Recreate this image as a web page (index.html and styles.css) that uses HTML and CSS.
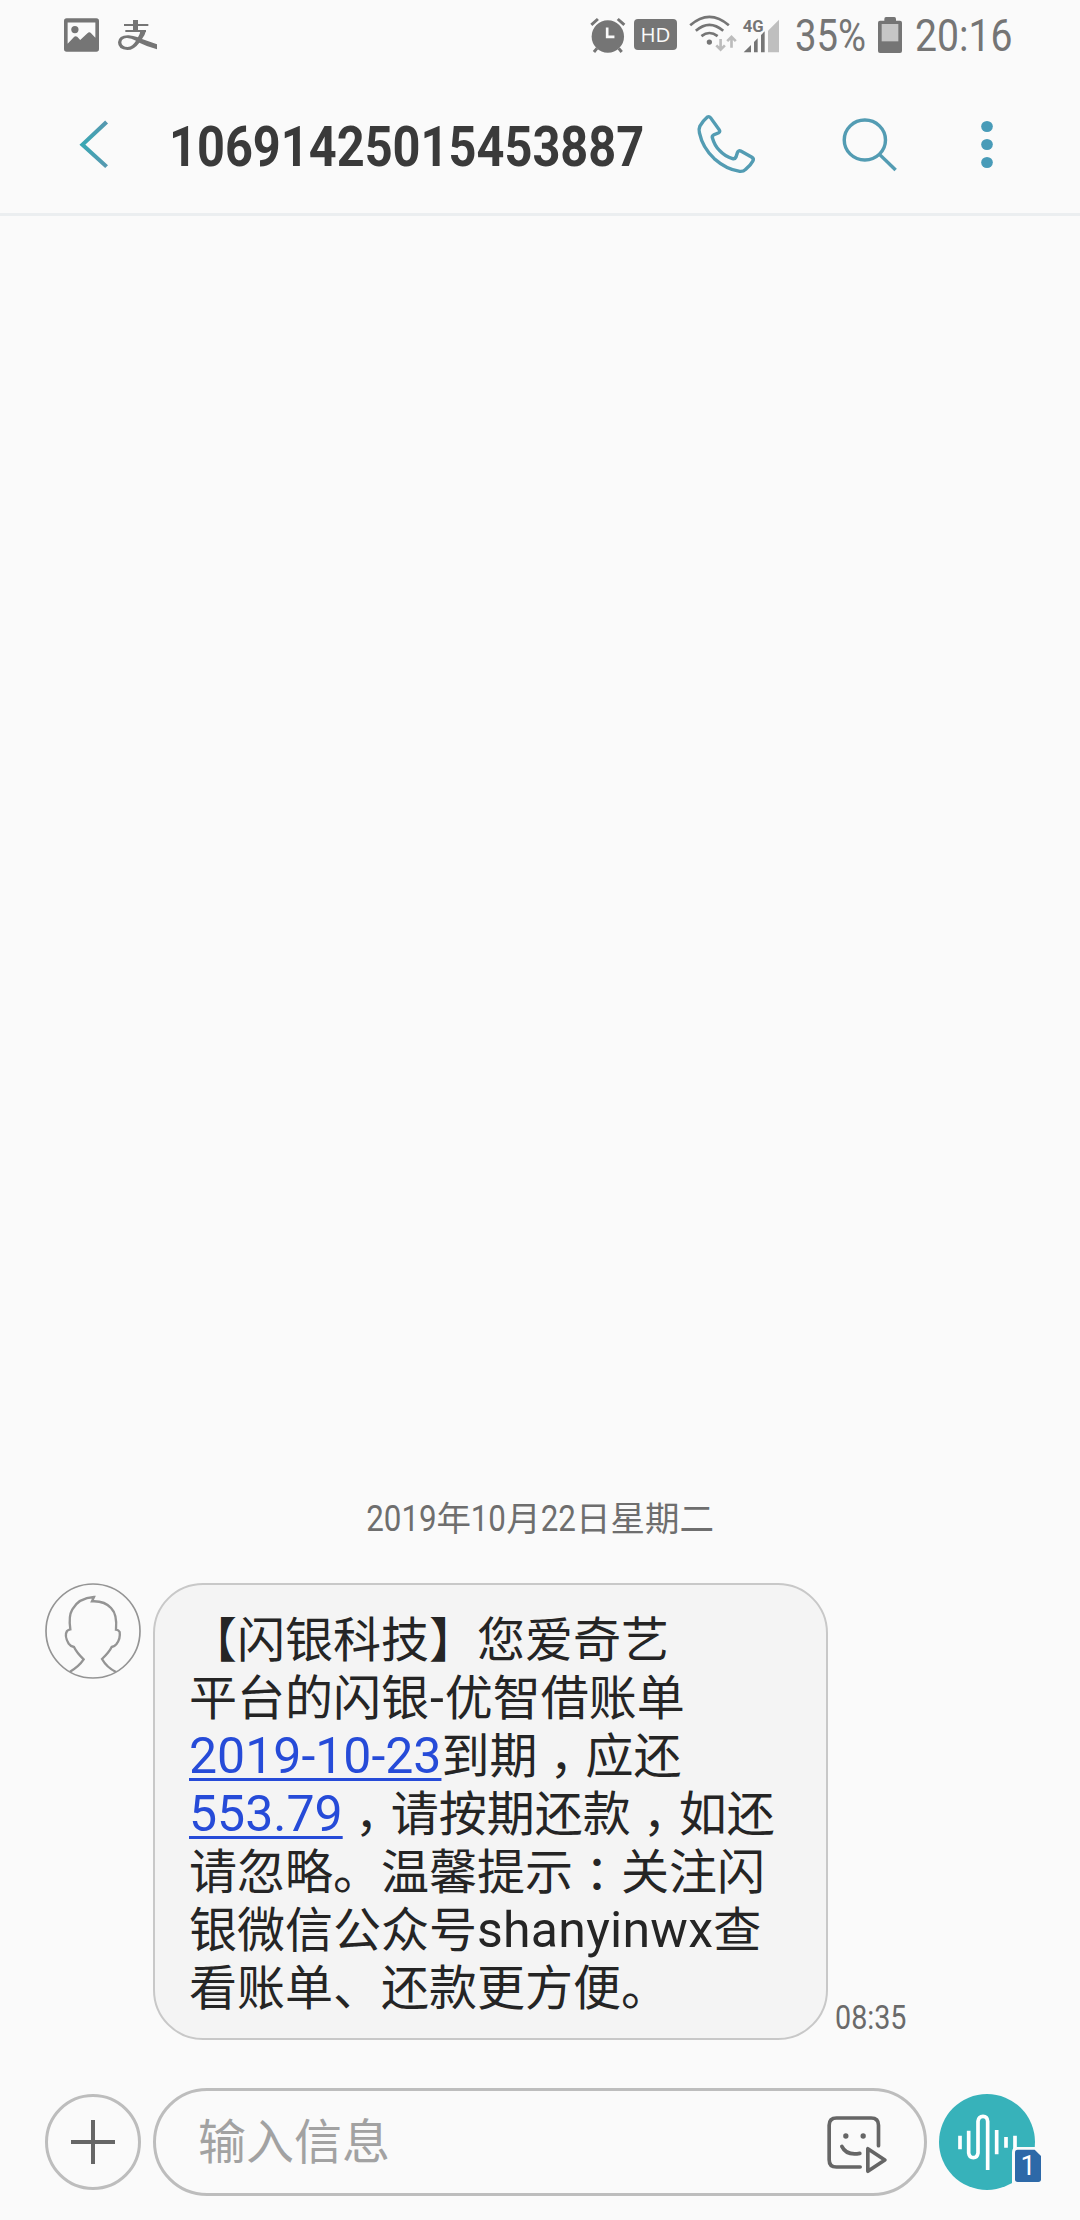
FILE: index.html
```
<!DOCTYPE html>
<html lang="zh-CN">

<head>
  <meta charset="UTF-8">
  <meta name="viewport" content="width=device-width, initial-scale=1.0">
  <title>信息</title>
  <link rel="stylesheet" href="styles.css">
</head>

<body>
  <div class="status">
    <svg class="st-photo" viewBox="73 53 106 101">
      <path fill="#757575" fill-rule="evenodd" d="M81 53h90q8 0 8 8v85q0 8-8 8H81q-8 0-8-8V61q0-8 8-8zM84 66v64l20-21q4-4 9 0l9 10 22-21q6-5 11 0l13 14V66z" />
      <circle cx="106" cy="87" r="11" fill="#757575" />
    </svg>
    <svg class="st-pay" viewBox="234 60 117 90">
      <path fill="#757575" d="M279 60h15v32h-15zM252 72h73v6h-73zM256 90h62v6h-62z" />
      <path fill="#757575" d="M301 92h17q-3 13-12 25l45 16v15q-29-8-53-20-16 22-36 22-28-1-28-23 2-22 32-21 13 1 28 6 6-9 7-20zM288 122q-16-9-29-8-15 2-15 14 2 12 19 13 15-2 25-19z" fill-rule="evenodd" />
    </svg>
    <svg class="st-alarm" viewBox="61 50 107 109">
      <circle cx="114" cy="109" r="49" fill="#757575" />
      <path d="M64 74l20-18M144 56l20 18M81 145l-9 11M147 145l9 11" stroke="#757575" stroke-width="9" fill="none" />
      <path d="M112 82v28h22" stroke="#fafafa" stroke-width="8" fill="none" />
    </svg>
    <div class="hd">HD</div>
    <svg class="st-wifi" viewBox="360 46 144 112">
      <path d="M363 77Q421 26 480 77M380 94Q421 58 463 94M397 110Q421 91 446 110" stroke="#757575" stroke-width="8" fill="none" />
      <circle cx="421" cy="128" r="8" fill="#757575" />
      <path d="M455 119v30M442 138l13 13 13-13M488 145v-30M475 125l13-13 13 13" stroke="#bcbcbc" stroke-width="8" fill="none" />
    </svg>
    <svg class="st-signal" viewBox="522 56 108 102">
      <path fill="#bfbfbf" d="M597 91l33-33v98h-33z" />
      <path fill="#757575" d="M524 156l22-22v22zM555 125l11-11v42h-11zM576 104l11-11v63h-11z" />
      <text x="521" y="96" class="net">4G</text>
    </svg>
    <div class="percent"><span class="narrow">35%</span></div>
    <svg class="st-battery" viewBox="294 51 72 108">
      <path fill="#757575" d="M318 51h25q5 0 5 6v5h12q6 0 6 6v85q0 6-6 6h-60q-6 0-6-6V68q0-6 6-6h13v-5q0-6 5-6z" />
      <path fill="#c6c6c6" d="M305 72h50v52h-50z" />
    </svg>
    <div class="clock"><span class="narrow">20:16</span></div>
  </div>

  <div class="header">
    <svg class="back" viewBox="230 120 87 147" preserveAspectRatio="none">
      <defs>
        <linearGradient id="teal" x1="0" y1="0" x2="0" y2="1">
          <stop offset="0" stop-color="#5798b0" />
          <stop offset="0.5" stop-color="#3aa8b4" />
          <stop offset="1" stop-color="#5798b0" />
        </linearGradient>
      </defs>
      <path d="M310 126l-70 68 70 66" stroke="url(#teal)" stroke-width="12" fill="none" />
    </svg>
    <div class="title"><span class="narrow">10691425015453887</span></div>
    <svg class="call" viewBox="450 98 180 186" preserveAspectRatio="none">
      <path d="M486 110Q491 107 495 112L520 148Q524 154 519 157L505 163Q498 167 501 174Q507 196 521 210Q537 228 559 235Q566 237 569 230L573 217Q576 209 583 212L614 230Q622 235 618 242Q611 256 597 267Q590 274 580 273Q541 267 506 235Q472 202 463 158Q460 147 464 138Q472 122 486 110Z" />
    </svg>
    <svg class="search" viewBox="878 110 160 165" preserveAspectRatio="none">
      <circle cx="944.500" cy="179" r="60" />
      <path d="M987 222l47 47" />
    </svg>
    <svg class="more" viewBox="1280 120 34 147" preserveAspectRatio="none">
      <circle cx="1297" cy="139.500" r="16.500" />
      <circle cx="1297" cy="193.500" r="16.500" />
      <circle cx="1297" cy="247.500" r="16.500" />
    </svg>
  </div>

  <div class="chat">
    <div class="date"><span class="num year">2019</span>年<span class="num">10</span>月<span class="num">22</span>日星期二</div>
    <div class="message">
      <svg class="avatar" viewBox="75 309 288 288">
        <circle cx="219" cy="453" r="141" stroke-width="5" />
        <path stroke-width="7" d="M150 575Q177 559 191 538Q170 518 162 501Q151 499 146 491Q132 467 141 453Q145 449 151 448Q145 408 157 388Q176 354 222 351L216 364Q254 362 274 385Q292 403 288 449Q296 450 299 456Q302 476 289 493Q284 499 275 501Q268 516 246 537Q260 562 288 576" />
      </svg>
      <div class="bubble">【闪银科技】您爱奇艺<br>平台的闪银<span class="latin dash">-</span>优智借账单<br><a class="latin">2019-10-23</a>到期<span class="mid">，</span>应还<br><a class="latin">553.79</a><span class="mid">，</span>请按期还款<span class="mid">，</span>如还<br>请忽略。温馨提示<span class="mid">：</span>关注闪<br>银微信公众号<span class="latin word">shanyinwx</span>查<br>看账单、还款更方便。</div>
      <div class="time"><span class="narrow">08:35</span></div>
    </div>
  </div>

  <div class="composer">
    <div class="plus">
      <svg viewBox="0 0 44 44">
        <path d="M22 0v44M0 22h44" stroke="#666" stroke-width="4" />
      </svg>
    </div>
    <div class="field">
      <div class="hint">输入信息</div>
      <svg class="sticker" viewBox="138 165 182 177">
        <path d="M240 321h-71q-22 0-22-22V196q0-22 22-22h104q22 0 22 22v61M185 259q14 29 54 21" />
        <path d="M263 266v68l51-34z" />
        <circle cx="197" cy="228" r="8" />
        <circle cx="249" cy="228" r="8" />
      </svg>
    </div>
    <div class="voice">
      <svg class="wave" viewBox="477 102 288 288">
        <path d="M540 227v41M566 212v67q2 14 14 14t14-14v-95q2-15 15-15t14 15v146M650 210v73M678 231v32M705 227v40" />
      </svg>
      <div class="sim">
        <svg viewBox="696 261 90 108">
          <path d="M712 261h57l21 22v90h-94v-96q0-16 16-16z" fill="#fafafa" />
          <path d="M713 269h51l19 19v70q0 8-8 8h-62q-8 0-8-8v-81q0-8 8-8z" fill="#2d69a8" />
        </svg>
        <span>1</span>
      </div>
    </div>
  </div>
</body>

</html>
```
FILE: styles.css
```
body {
  margin: 0;
  width: 1080px;
  height: 2220px;
  display: flex;
  flex-direction: column;
  overflow: hidden;
  background: #fafafa;
  font-family: Roboto, 'Noto Sans CJK SC', sans-serif;
}

svg {
  display: block;
  flex: none;
}

/* condensed digits */
.narrow {
  display: inline-block;
  transform-origin: 0 50%;
  white-space: nowrap;
}

/* status bar */
.status {
  height: 72px;
  display: flex;
  align-items: flex-start;
  color: #757575;
}

.st-photo {
  width: 35px;
  height: 34px;
  margin: 18px 0 0 64px;
}

.st-pay {
  width: 39px;
  height: 30px;
  margin: 20px 0 0 19px;
}

.st-alarm {
  width: 36px;
  height: 36px;
  margin: 17px 0 0 433px;
}

.hd {
  width: 43px;
  height: 31px;
  margin: 19px 0 0 8px;
  border-radius: 4px;
  background: #757575;
  color: #fafafa;
  font-family: 'Open Sans', sans-serif;
  font-size: 20.5px;
  line-height: 31px;
  text-align: center;
}

.st-wifi {
  width: 48px;
  height: 37px;
  margin: 15px 0 0 12px;
}

.st-signal {
  width: 36px;
  height: 34px;
  margin: 19px 0 0 6px;
  overflow: visible;
}

.net {
  font-size: 50px;
  font-weight: 700;
  fill: #757575;
}

.percent {
  width: 70px;
  margin: 9px 0 0 16px;
  font-size: 45px;
  line-height: 54px;
}

.percent .narrow {
  transform: scaleX(0.85);
}

.st-battery {
  width: 24px;
  height: 36px;
  margin: 17px 0 0 13px;
}

.clock {
  margin: 9px 0 0 13px;
  font-size: 45px;
  line-height: 54px;
}

.clock .narrow {
  transform: scaleX(0.87);
}

/* header */
.header {
  height: 141px;
  display: flex;
  align-items: flex-start;
  border-bottom: 3px solid #ebeef0;
}

.back {
  width: 30px;
  height: 49px;
  margin: 48px 0 0 79px;
}

.title {
  width: 476px;
  margin: 40px 0 0 60px;
  color: #3a3a3a;
  font-size: 56px;
  font-weight: 700;
  line-height: 70px;
}

.title .narrow {
  transform: scaleX(0.87);
}

.call {
  width: 62px;
  height: 62px;
  margin: 41px 0 0 50px;
  fill: none;
  stroke: #539cb3;
  stroke-width: 10;
}

.search {
  width: 55px;
  height: 55px;
  margin: 45px 0 0 85px;
  fill: none;
  stroke: #539cb3;
  stroke-width: 10;
}

.more {
  width: 12px;
  height: 49px;
  margin: 48px 0 0 84px;
  fill: #489bb8;
}

/* conversation */
.chat {
  flex: 1;
  display: flex;
  flex-direction: column;
  justify-content: flex-end;
}

.date {
  display: flex;
  justify-content: center;
  height: 50px;
  margin-bottom: 39px;
  color: #6e6e6e;
  font-size: 34.5px;
  line-height: 50px;
}

.date .num {
  margin: 0 -0.073em;
  font-size: 36px;
  transform: scaleX(0.87);
}

.date .year {
  margin: 0 -0.146em;
}

.message {
  display: flex;
  align-items: flex-start;
}

.avatar {
  width: 96px;
  height: 96px;
  margin-left: 45px;
  fill: none;
  stroke: #949494;
}

.bubble {
  box-sizing: border-box;
  width: 675px;
  height: 457px;
  margin-left: 12px;
  padding: 22px 0 0 34px;
  border: 2px solid #c8c8c8;
  border-radius: 50px;
  background: #f4f4f4;
  color: #252525;
  font-family: 'Noto Sans CJK SC', sans-serif;
  font-size: 48px;
  line-height: 58px;
  white-space: nowrap;
  text-spacing-trim: space-all;
}

.latin {
  font-family: Roboto, sans-serif;
  font-size: 50px;
  line-height: 1;
}

.dash {
  margin: 0 1px;
}

.word {
  letter-spacing: 0.25px;
}

a.latin {
  color: #264bd8;
  text-decoration: underline;
  text-decoration-thickness: 3px;
  text-underline-offset: 5px;
  text-decoration-skip-ink: none;
}

/* full-width marks drawn in the middle of their cell */
.mid {
  margin: 0 -12px 0 12px;
}

.time {
  align-self: flex-end;
  margin: 0 0 2px 7px;
  color: #6a6a6a;
  font-size: 33px;
  line-height: 40px;
}

.time .narrow {
  transform: scaleX(0.87);
}

/* composer */
.composer {
  display: flex;
  align-items: center;
  padding: 48px 0 24px 45px;
}

.plus {
  box-sizing: border-box;
  width: 96px;
  height: 96px;
  display: flex;
  align-items: center;
  justify-content: center;
  border: 3px solid #bdbdbd;
  border-radius: 50%;
}

.plus svg {
  width: 44px;
  height: 44px;
}

.field {
  box-sizing: border-box;
  width: 774px;
  height: 108px;
  margin-left: 12px;
  padding: 0 37px 0 42px;
  display: flex;
  align-items: center;
  justify-content: space-between;
  border: 3px solid #bdbdbd;
  border-radius: 54px;
}

.hint {
  padding-top: 2px;
  color: #a2a2a2;
  font-size: 48px;
  line-height: 60px;
}

.sticker {
  width: 61px;
  height: 59px;
  margin-top: 4px;
  fill: none;
  stroke: #666;
  stroke-width: 11;
  stroke-linecap: round;
  stroke-linejoin: round;
}

.sticker circle {
  fill: #666;
  stroke: none;
}

.voice {
  position: relative;
  width: 96px;
  height: 96px;
  margin-left: 12px;
  border-radius: 50%;
  background: #37b2ba;
}

.wave {
  width: 96px;
  height: 96px;
  fill: none;
  stroke: #fff;
  stroke-width: 11;
}

.sim {
  position: absolute;
  left: 73px;
  top: 53px;
  width: 30px;
  height: 36px;
}

.sim span {
  position: absolute;
  left: 3px;
  top: 3px;
  width: 26px;
  color: #fff;
  font-size: 27px;
  line-height: 32px;
  text-align: center;
}
```
